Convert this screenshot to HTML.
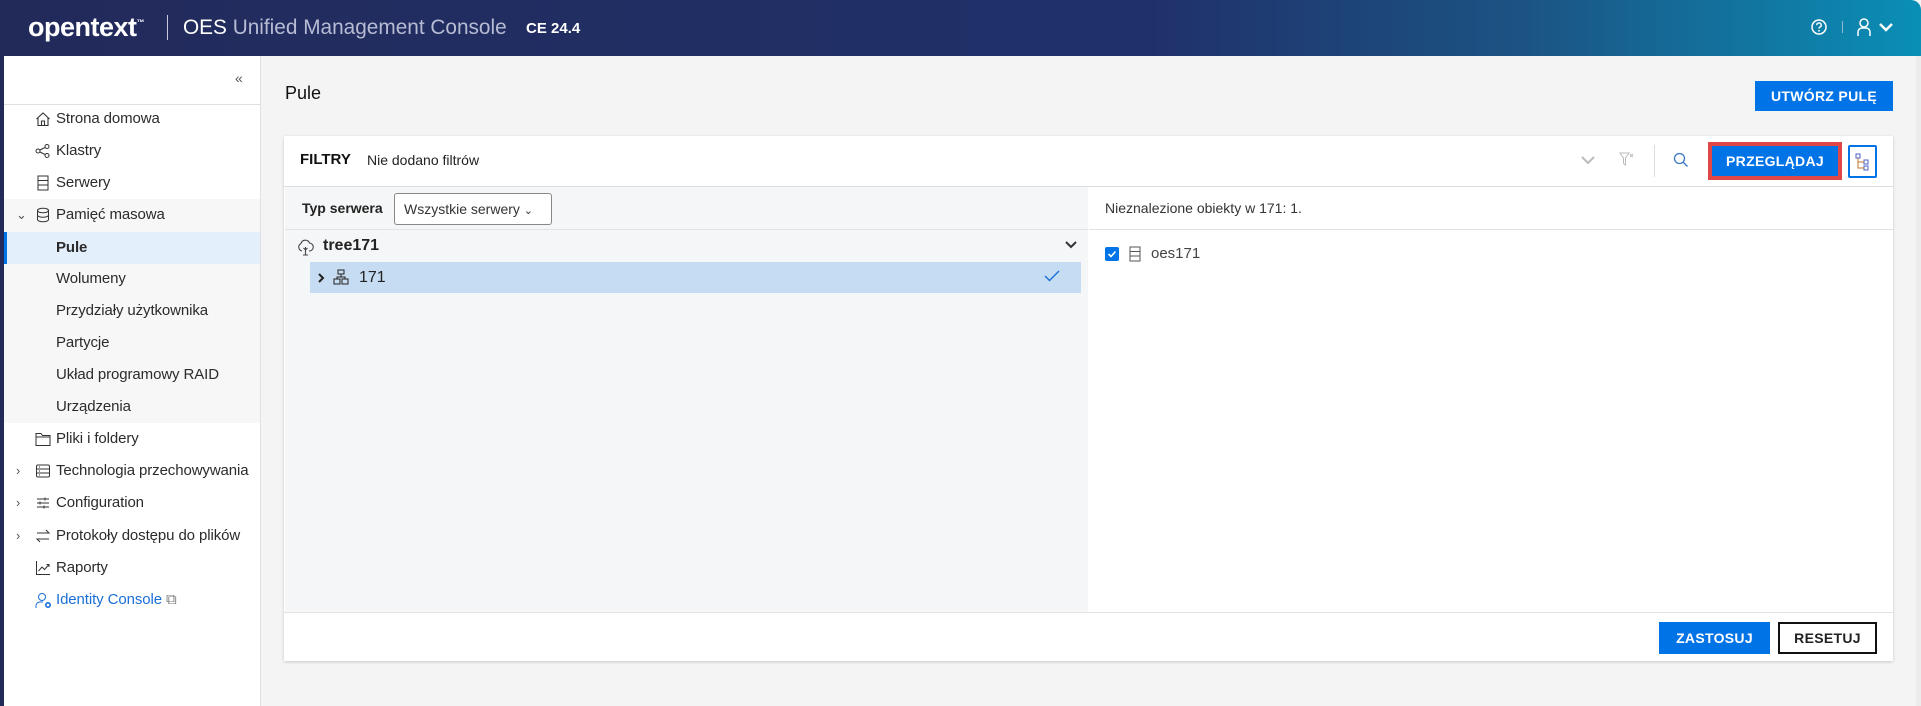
<!DOCTYPE html>
<html><head><meta charset="utf-8"><style>
*{box-sizing:border-box;margin:0;padding:0}
body{width:1921px;height:706px;overflow:hidden;background:#f4f4f4;font-family:"Liberation Sans",Arial,sans-serif;color:#222;position:relative}
.abs{position:absolute}
.hdr{left:0;top:0;width:1921px;height:56px;background:linear-gradient(90deg,#222a5a 0%,#20316a 60%,#1b5585 80%,#0a8fb6 100%);border-radius:0 10px 0 0}
.side{left:4px;top:56px;width:257px;height:650px;background:#fff;border-right:1px solid #e2e2e2}
.item{position:absolute;left:4px;width:256px;height:32px;font-size:15px;line-height:32px;color:#2b2b2b;letter-spacing:-0.1px}
.item .t{position:absolute;left:52px}
.item svg{position:absolute;left:31px;top:8px}
.chev{position:absolute;left:12px;top:0;font-size:13px;color:#555}
.btn{position:absolute;background:#0073e7;color:#fff;font-weight:bold;font-size:14px;text-align:center;letter-spacing:.3px}
</style></head><body>
<div class="abs hdr"></div>
<div class="abs" style="left:0;top:0;width:4px;height:706px;background:#222a5a"></div>
<div class="abs" style="left:28px;top:12px;color:#fff;font-size:27px;font-weight:bold;letter-spacing:-0.5px">opentext<span style="font-size:8px;vertical-align:top;position:relative;top:6px">™</span></div>
<div class="abs" style="left:167px;top:15px;width:1px;height:25px;background:#c8cbe0"></div>
<div class="abs" style="left:183px;top:16px;font-size:20.8px;color:#fff">OES <span style="color:#b7bcd4">Unified Management Console</span></div>
<div class="abs" style="left:526px;top:20px;font-size:15px;font-weight:bold;color:#fff">CE 24.4</div>
<svg class="abs" style="left:1810px;top:18px" width="18" height="18" viewBox="0 0 18 18"><circle cx="9" cy="9" r="7" fill="none" stroke="#fff" stroke-width="1.5"/><path d="M6.8 7.2a2.2 2.2 0 1 1 3 2c-.7.3-.8.7-.8 1.4" fill="none" stroke="#fff" stroke-width="1.4"/><circle cx="9" cy="12.8" r=".9" fill="#fff"/></svg>
<div class="abs" style="left:1842px;top:21px;width:1px;height:12px;background:#8fb9cf"></div>
<svg class="abs" style="left:1856px;top:17px" width="16" height="20" viewBox="0 0 16 20"><circle cx="8" cy="6" r="4" fill="none" stroke="#fff" stroke-width="1.5"/><path d="M2 19v-4a4 4 0 0 1 4-4h4a4 4 0 0 1 4 4v4" fill="none" stroke="#fff" stroke-width="1.5"/></svg>
<svg class="abs" style="left:1878px;top:21px" width="16" height="12" viewBox="0 0 16 12"><path d="M2 3l6 6 6-6" fill="none" stroke="#fff" stroke-width="2.5"/></svg>

<div class="abs side"></div>
<div class="abs" style="left:235px;top:70px;font-size:14px;color:#555">«</div>
<div class="abs" style="left:4px;top:104px;width:256px;height:1px;background:#e0e0e0"></div>
<div class="abs" style="left:4px;top:199px;width:256px;height:224px;background:#f7f7f7"></div>
<div class="abs" style="left:4px;top:232px;width:256px;height:32px;background:#e3effb"></div>
<div class="abs" style="left:4px;top:232px;width:3px;height:32px;background:#0073e7"></div>

<div class="item" style="top:103px"><svg width="16" height="16" viewBox="0 0 16 16"><path d="M1.5 8L8 2l6.5 6M3 7v7.5h10V7M6.5 14.5V10h3v4.5" fill="none" stroke="#333" stroke-width="1.1"/></svg><span class="t">Strona domowa</span></div>
<div class="item" style="top:135px"><svg width="16" height="16" viewBox="0 0 16 16"><circle cx="3" cy="8" r="2" fill="none" stroke="#333"/><circle cx="12" cy="3.5" r="2" fill="none" stroke="#333"/><circle cx="12" cy="12.5" r="2" fill="none" stroke="#333"/><path d="M5 7l5-2.5M5 9l5 2.5" stroke="#333"/></svg><span class="t">Klastry</span></div>
<div class="item" style="top:167px"><svg width="16" height="16" viewBox="0 0 16 16"><rect x="3" y="1" width="10" height="14" fill="none" stroke="#333"/><path d="M3 5.5h10M3 10h10" stroke="#333"/></svg><span class="t">Serwery</span></div>
<div class="item" style="top:199px"><span class="chev">⌄</span><svg width="16" height="16" viewBox="0 0 16 16"><ellipse cx="8" cy="3.5" rx="5.5" ry="2.3" fill="none" stroke="#333"/><path d="M2.5 3.5v9c0 1.3 2.5 2.3 5.5 2.3s5.5-1 5.5-2.3v-9M2.5 8c0 1.3 2.5 2.3 5.5 2.3s5.5-1 5.5-2.3" fill="none" stroke="#333"/></svg><span class="t">Pamięć masowa</span></div>
<div class="item" style="top:232px;font-weight:bold"><span class="t">Pule</span></div>
<div class="item" style="top:263px"><span class="t">Wolumeny</span></div>
<div class="item" style="top:295px"><span class="t">Przydziały użytkownika</span></div>
<div class="item" style="top:327px"><span class="t">Partycje</span></div>
<div class="item" style="top:359px"><span class="t">Układ programowy RAID</span></div>
<div class="item" style="top:391px"><span class="t">Urządzenia</span></div>
<div class="item" style="top:423px"><svg width="16" height="16" viewBox="0 0 16 16"><path d="M1 2.5h5l1.5 2H15v10H1zM1 6h14" fill="none" stroke="#333"/></svg><span class="t">Pliki i foldery</span></div>
<div class="item" style="top:455px"><span class="chev">›</span><svg width="16" height="16" viewBox="0 0 16 16"><rect x="1.5" y="2" width="13" height="12" rx="1.5" fill="none" stroke="#333"/><path d="M1.5 6h13M1.5 10h13M4 4h1M4 8h1M4 12h1" stroke="#333"/></svg><span class="t">Technologia przechowywania</span></div>
<div class="item" style="top:487px"><span class="chev">›</span><svg width="16" height="16" viewBox="0 0 16 16"><path d="M2 4h12M2 8h12M2 12h12M10 2.5v3M5 6.5v3M9 10.5v3" stroke="#333"/></svg><span class="t">Configuration</span></div>
<div class="item" style="top:520px"><span class="chev">›</span><svg width="16" height="16" viewBox="0 0 16 16"><path d="M2 5h12l-3-3M14 11H2l3 3" fill="none" stroke="#333"/></svg><span class="t">Protokoły dostępu do plików</span></div>
<div class="item" style="top:552px"><svg width="16" height="16" viewBox="0 0 16 16"><path d="M1.5 1v13.5H15M3.5 11l3.5-4 2.5 2.5L14 4.5M11.5 4.5H14V7" fill="none" stroke="#333"/></svg><span class="t">Raporty</span></div>
<div class="item" style="top:584px;color:#1a6fd8"><svg width="18" height="18" viewBox="0 0 18 18"><circle cx="7" cy="5" r="3.5" fill="none" stroke="#1a6fd8"/><path d="M1 16v-2.5A4 4 0 0 1 5 10h3" fill="none" stroke="#1a6fd8"/><circle cx="13" cy="13" r="2.2" fill="none" stroke="#1a6fd8" stroke-width="1.6"/></svg><span class="t">Identity Console <span style="color:#777">⧉</span></span></div>

<div class="abs" style="left:285px;top:83px;font-size:18px;color:#111">Pule</div>
<div class="btn" style="left:1755px;top:81px;width:138px;height:30px;line-height:30px">UTWÓRZ PULĘ</div>

<div class="abs" style="left:284px;top:136px;width:1609px;height:525px;background:#fff;box-shadow:0 1px 3px rgba(0,0,0,.18)"></div>
<div class="abs" style="left:300px;top:151px;font-size:15px;font-weight:bold;color:#111">FILTRY</div>
<div class="abs" style="left:367px;top:152px;font-size:14px;color:#222">Nie dodano filtrów</div>
<svg class="abs" style="left:1580px;top:155px" width="16" height="10" viewBox="0 0 16 10"><path d="M2 2l6 6 6-6" fill="none" stroke="#bbb" stroke-width="2"/></svg>
<svg class="abs" style="left:1619px;top:152px" width="16" height="16" viewBox="0 0 16 16"><path d="M1 1h9l-3.5 5v7l-2-1.5V6z" fill="none" stroke="#bbb"/><path d="M11 2l3 3M14 2l-3 3" stroke="#bbb"/></svg>
<div class="abs" style="left:1654px;top:145px;width:1px;height:32px;background:#ddd"></div>
<svg class="abs" style="left:1673px;top:152px" width="16" height="16" viewBox="0 0 16 16"><circle cx="6.5" cy="6.5" r="5" fill="none" stroke="#3a77c4" stroke-width="1.3"/><path d="M10 10l4.5 4.5" stroke="#3a77c4" stroke-width="1.3"/></svg>
<div class="abs" style="left:1708px;top:142px;width:134px;height:38px;background:#e04848"></div>
<div class="btn" style="left:1712px;top:146px;width:126px;height:30px;line-height:30px">PRZEGLĄDAJ</div>
<div class="abs" style="left:1848px;top:145px;width:29px;height:33px;border:2px solid #0073e7;border-radius:2px"></div>
<svg class="abs" style="left:1855px;top:153px" width="16" height="18" viewBox="0 0 16 18"><rect x="1" y="1" width="4" height="4" fill="none" stroke="#4b5fc4"/><rect x="9" y="7" width="4" height="4" fill="none" stroke="#4b5fc4"/><rect x="9" y="13" width="4" height="4" fill="none" stroke="#4b5fc4"/><path d="M3 5v10h6M3 9h6" fill="none" stroke="#c07a2a"/></svg>
<div class="abs" style="left:284px;top:186px;width:1609px;height:1px;background:#ddd"></div>

<div class="abs" style="left:285px;top:187px;width:803px;height:425px;background:#f5f6f7"></div>
<div class="abs" style="left:302px;top:200px;font-size:14px;font-weight:bold;color:#222">Typ serwera</div>
<div class="abs" style="left:394px;top:193px;width:158px;height:32px;border:1px solid #888;border-radius:3px;background:#fff;font-size:14px;line-height:30px;padding-left:9px;color:#333">Wszystkie serwery <span style="font-size:11px">⌄</span></div>
<div class="abs" style="left:285px;top:229px;width:803px;height:1px;background:#e2e2e2"></div>
<svg class="abs" style="left:297px;top:238px" width="17" height="18" viewBox="0 0 17 18"><path d="M5 13a4 4 0 0 1-1-7.5A4.5 4.5 0 0 1 12.5 5 4 4 0 0 1 12 13M8.5 9v8M6 17h5M8.5 12l-2-2M8.5 12l2-2" fill="none" stroke="#444" stroke-width="1.1"/></svg>
<div class="abs" style="left:323px;top:237px;font-size:16px;font-weight:bold;color:#222">tree171</div>
<svg class="abs" style="left:1064px;top:240px" width="14" height="10" viewBox="0 0 14 10"><path d="M2 2l5 5 5-5" fill="none" stroke="#333" stroke-width="2"/></svg>
<div class="abs" style="left:310px;top:262px;width:771px;height:31px;background:#c5dcf2"></div>
<svg class="abs" style="left:317px;top:272px" width="9" height="12" viewBox="0 0 9 12"><path d="M2 2l4 4-4 4" fill="none" stroke="#222" stroke-width="2"/></svg>
<svg class="abs" style="left:333px;top:269px" width="16" height="16" viewBox="0 0 16 16"><rect x="5" y="1" width="6" height="4" fill="none" stroke="#222"/><rect x="1" y="10" width="6" height="5" fill="none" stroke="#222"/><rect x="9" y="10" width="6" height="5" fill="none" stroke="#222"/><path d="M8 5v3M4 10V8h8v2" fill="none" stroke="#222"/></svg>
<div class="abs" style="left:359px;top:269px;font-size:16px;color:#222">171</div>
<svg class="abs" style="left:1044px;top:270px" width="16" height="12" viewBox="0 0 16 12"><path d="M1 6l4.5 4.5L15 1" fill="none" stroke="#1a6fd8" stroke-width="1.4"/></svg>

<div class="abs" style="left:1105px;top:200px;font-size:14px;color:#333">Nieznalezione obiekty w 171: 1.</div>
<div class="abs" style="left:1089px;top:229px;width:804px;height:1px;background:#e2e2e2"></div>
<div class="abs" style="left:1105px;top:247px;width:14px;height:14px;background:#0073e7;border-radius:2px"></div>
<svg class="abs" style="left:1107px;top:249px" width="10" height="10" viewBox="0 0 10 10"><path d="M1.5 5l2.5 2.5L8.5 2.5" fill="none" stroke="#fff" stroke-width="1.6"/></svg>
<svg class="abs" style="left:1129px;top:246px" width="12" height="16" viewBox="0 0 12 16"><rect x="1" y="1" width="10" height="14" fill="none" stroke="#555"/><path d="M1 5.5h10M1 10h10" stroke="#555"/></svg>
<div class="abs" style="left:1151px;top:245px;font-size:15px;color:#444">oes171</div>

<div class="abs" style="left:284px;top:612px;width:1609px;height:1px;background:#e2e2e2"></div>
<div class="btn" style="left:1659px;top:622px;width:111px;height:32px;line-height:32px">ZASTOSUJ</div>
<div class="abs" style="left:1778px;top:622px;width:99px;height:32px;border:2px solid #111;font-weight:bold;font-size:14px;text-align:center;line-height:28px;color:#222;letter-spacing:.3px">RESETUJ</div>
<div class="abs" style="left:1916px;top:56px;width:5px;height:650px;background:#ececec"></div>
</body></html>
